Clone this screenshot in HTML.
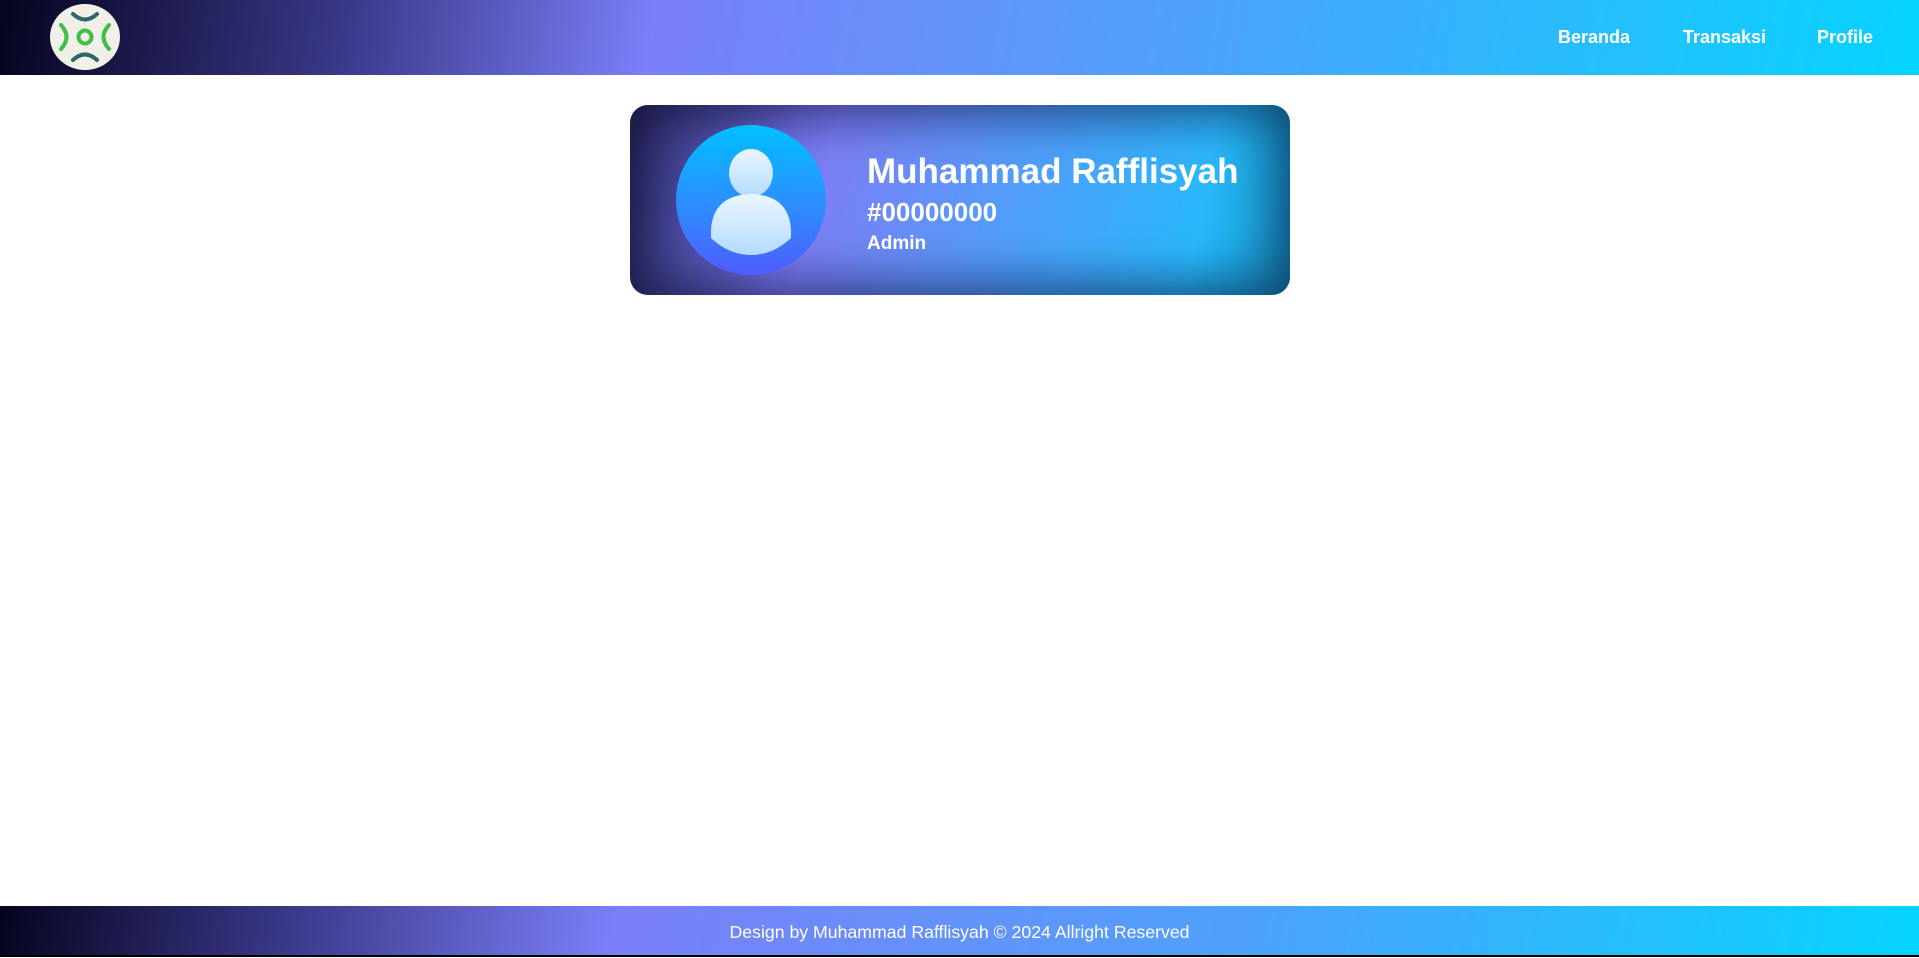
<!DOCTYPE html>
<html><head><meta charset="utf-8"><style>
*{margin:0;padding:0;box-sizing:border-box}
html,body{width:1919px;height:957px;overflow:hidden;background:#fff;font-family:"Liberation Sans",sans-serif}
.hdr{position:absolute;left:0;top:0;width:1919px;height:75px;background:linear-gradient(100deg,#05041e 0%,#3a3888 18%,#7b7ff8 34%,#4ea2fb 62%,#05d4ff 100%)}
.logo{position:absolute;left:50px;top:4px;width:70px;height:66px;border-radius:50%;background:#f0f0e8}
.nav a{position:absolute;top:27px;color:#fff;font-weight:bold;font-size:18px;text-decoration:none}
.card{position:absolute;left:630px;top:105px;width:660px;height:190px;border-radius:18px;overflow:hidden;
background:linear-gradient(105deg,#4a46a8 0%,#7c7ff6 30%,#4ea0fb 60%,#22bdfd 90%);
box-shadow:inset 0 0 50px 10px rgba(5,5,40,.6)}
.card::after{content:"";position:absolute;inset:0;background:linear-gradient(100deg,rgba(0,0,0,.35),rgba(0,0,0,0) 25%,rgba(0,0,0,0) 85%,rgba(0,40,60,.3))}
.av{position:absolute;left:46px;top:20px;width:150px;height:150px;border-radius:50%;background:linear-gradient(180deg,#00c0ff,#2e8cff 55%,#4f5cff);z-index:2}
.t{position:absolute;color:#fff;font-weight:bold;z-index:2;white-space:nowrap}
.ftr{position:absolute;left:0;top:906px;width:1919px;height:49px;background:linear-gradient(100deg,#05041e 0%,#3a3888 15%,#7b7ff8 32%,#4ea2fb 65%,#05d4ff 100%);color:#fff;font-size:17.7px;text-align:center;line-height:52px}
.ftrb{position:absolute;left:0;top:955px;width:1919px;height:2px;background:#000}
</style></head><body>
<div class="hdr">
<div class="logo"><svg width="70" height="66" viewBox="0 0 70 66" fill="none" stroke-linecap="round">
<path d="M23 10 Q35 21 47 10" stroke="#2f6767" stroke-width="4"/>
<path d="M23 56 Q35 45 47 56" stroke="#2f6767" stroke-width="4"/>
<path d="M11 21 Q22 33 11 45" stroke="#3fbf4a" stroke-width="4"/>
<path d="M59 21 Q48 33 59 45" stroke="#3fbf4a" stroke-width="4"/>
<circle cx="35" cy="33" r="6.5" stroke="#3fbf4a" stroke-width="4"/></svg></div>
<div class="nav"><a style="left:1558px">Beranda</a><a style="left:1683px">Transaksi</a><a style="left:1817px">Profile</a></div>
</div>
<div class="card">
<div class="av"><svg width="150" height="150" viewBox="0 0 150 150">
<defs><linearGradient id="g" x1="0" y1="0" x2="0" y2="1"><stop offset="0" stop-color="#eaf6ff"/><stop offset="1" stop-color="#b3dcff"/></linearGradient></defs>
<ellipse cx="75" cy="48" rx="22" ry="24" fill="url(#g)"/>
<path d="M35 113 L35 105 Q37 70 75 69 Q113 70 115 105 L115 113 Q97 130 75 130 Q53 130 35 113Z" fill="url(#g)"/></svg></div>
<div class="t" style="left:237px;top:46px;font-size:35px;line-height:42px">Muhammad Rafflisyah</div>
<div class="t" style="left:237px;top:92px;font-size:26px;line-height:30px">#00000000</div>
<div class="t" style="left:237px;top:128px;font-size:19px;line-height:22px">Admin</div>
</div>
<div class="ftr">Design by Muhammad Rafflisyah © 2024 Allright Reserved</div>
<div class="ftrb"></div>
</body></html>
